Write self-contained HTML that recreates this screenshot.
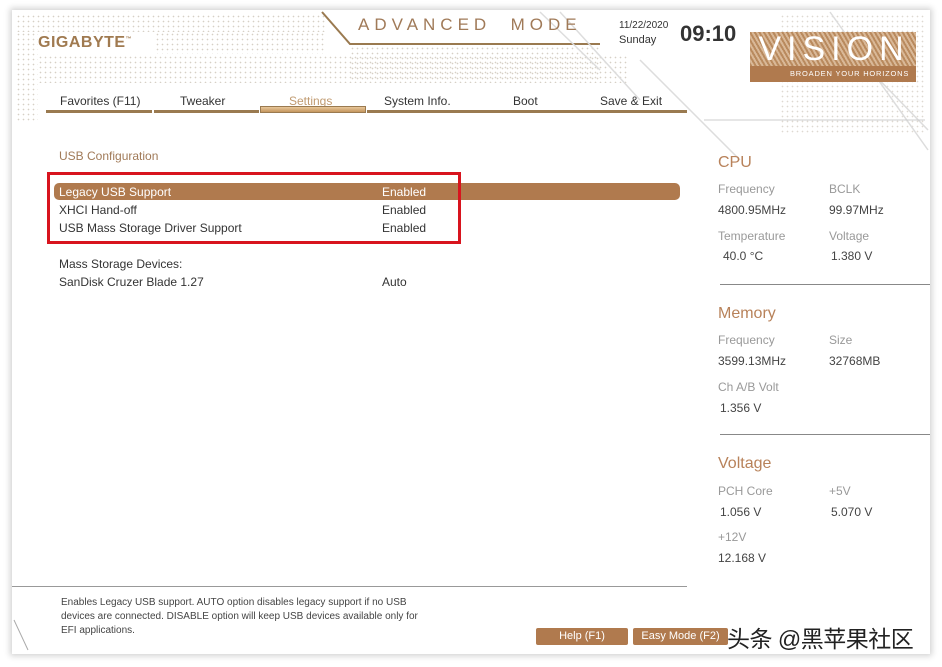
<!DOCTYPE html>
<html><head><meta charset="utf-8"><style>
*{margin:0;padding:0;box-sizing:border-box}
body{width:942px;height:667px;background:#fff;position:relative;overflow:hidden;font-family:"Liberation Sans","Noto Sans CJK SC",sans-serif;color:#333}
.panel{position:absolute;left:12px;top:10px;width:918px;height:644px;background:#fff;box-shadow:0 0 6px 2px rgba(0,0,0,.18)}
.t{position:absolute;white-space:nowrap;font-size:12px}
.dots{position:absolute;background-image:radial-gradient(#d6d0c6 0.7px,transparent 0.9px);background-size:5px 5px}
.tab{position:absolute;top:94px;font-size:12px;color:#333}
.ul{position:absolute;top:110px;height:3px;background:#9a7a50}
.g{color:#999;font-size:12px}
.v{color:#444;font-size:12px}
.h{color:#b8825a;font-size:16px}
.sep{position:absolute;height:1px;background:#888}
.btn{position:absolute;top:628px;height:17px;background:#b07a4e;color:#fff;font-size:11px;text-align:center;line-height:17px;border-radius:2px}
</style></head><body>
<div class="panel"></div>
<div class="dots" style="left:16px;top:14px;width:310px;height:18px"></div>
<div class="dots" style="left:16px;top:32px;width:22px;height:90px"></div>
<div class="dots" style="left:155px;top:32px;width:170px;height:22px"></div>
<div class="dots" style="left:38px;top:55px;width:590px;height:28px"></div>
<div class="dots" style="left:350px;top:46px;width:250px;height:36px"></div>
<div class="dots" style="left:780px;top:14px;width:146px;height:120px;opacity:.8"></div>
<svg style="position:absolute;left:0;top:0" width="942" height="667">
<path d="M322 12 L350 44 L600 44" stroke="#9a7a50" stroke-width="2" fill="none"/>
<path d="M540 12 L600 70 M560 12 L640 100 M640 60 L740 160 M830 12 L928 150 M860 60 L928 130" stroke="#ddd" stroke-width="1.5" fill="none"/>
<path d="M14 620 L28 650" stroke="#aaa" fill="none"/>
<path d="M704 120 L925 120" stroke="#ccc"/>
</svg>
<div class="t" style="left:38px;top:34px;font-size:16px;font-weight:bold;color:#a07a50;letter-spacing:.5px">GIGABYTE<sup style="font-size:6px">™</sup></div>
<div class="t" style="left:358px;top:15px;font-size:17px;color:#a07a58;letter-spacing:5px">ADVANCED&nbsp;&nbsp;MODE</div>
<div class="t" style="left:619px;top:20px;font-size:10px;color:#333">11/22/2020</div>
<div class="t" style="left:619px;top:34px;font-size:11px;color:#333">Sunday</div>
<div class="t" style="left:680px;top:21px;font-size:22px;font-weight:bold;color:#333">09:10</div>
<div style="position:absolute;left:750px;top:32px;width:166px;height:50px;background:repeating-linear-gradient(60deg,#b98a5e 0 2px,#d9b897 2px 4px)"></div>
<div class="t" style="left:752px;top:31px;width:164px;font-size:34px;color:#fff;letter-spacing:6px;line-height:36px;text-align:center">VISION</div>
<div style="position:absolute;left:750px;top:66px;width:166px;height:16px;background:#b07a4e"></div>
<div class="t" style="left:790px;top:69px;font-size:7.5px;color:#fff;letter-spacing:.8px">BROADEN YOUR HORIZONS</div>
<div class="tab" style="left:60px">Favorites (F11)</div>
<div class="tab" style="left:180px">Tweaker</div>
<div class="tab" style="left:289px;color:#c09a70">Settings</div>
<div class="tab" style="left:384px">System Info.</div>
<div class="tab" style="left:513px">Boot</div>
<div class="tab" style="left:600px">Save &amp; Exit</div>
<div class="ul" style="left:46px;width:106px"></div>
<div class="ul" style="left:154px;width:105px"></div>
<div class="ul" style="left:260px;top:106px;height:7px;width:106px;background:linear-gradient(#e8c79a,#c4965e);border:1px solid #9a7a50"></div>
<div class="ul" style="left:367px;width:320px"></div>
<div class="t" style="left:59px;top:149px;color:#a07a58">USB Configuration</div>
<div style="position:absolute;left:54px;top:183px;width:626px;height:17px;background:#b07a4e;border-radius:5px"></div>
<div class="t" style="left:59px;top:185px;color:#fff">Legacy USB Support</div>
<div class="t" style="left:382px;top:185px;color:#fff">Enabled</div>
<div class="t" style="left:59px;top:203px">XHCI Hand-off</div>
<div class="t" style="left:382px;top:203px">Enabled</div>
<div class="t" style="left:59px;top:221px">USB Mass Storage Driver Support</div>
<div class="t" style="left:382px;top:221px">Enabled</div>
<div style="position:absolute;left:47px;top:172px;width:414px;height:72px;border:3px solid #d8141e"></div>
<div class="t" style="left:59px;top:257px">Mass Storage Devices:</div>
<div class="t" style="left:59px;top:275px">SanDisk Cruzer Blade 1.27</div>
<div class="t" style="left:382px;top:275px">Auto</div>
<div class="t h" style="left:718px;top:154px">CPU</div>
<div class="t g" style="left:718px;top:182px">Frequency</div><div class="t g" style="left:829px;top:182px">BCLK</div>
<div class="t v" style="left:718px;top:203px">4800.95MHz</div><div class="t v" style="left:829px;top:203px">99.97MHz</div>
<div class="t g" style="left:718px;top:229px">Temperature</div><div class="t g" style="left:829px;top:229px">Voltage</div>
<div class="t v" style="left:723px;top:249px">40.0 °C</div><div class="t v" style="left:831px;top:249px">1.380 V</div>
<div class="sep" style="left:720px;top:284px;width:210px"></div>
<div class="t h" style="left:718px;top:305px">Memory</div>
<div class="t g" style="left:718px;top:333px">Frequency</div><div class="t g" style="left:829px;top:333px">Size</div>
<div class="t v" style="left:718px;top:354px">3599.13MHz</div><div class="t v" style="left:829px;top:354px">32768MB</div>
<div class="t g" style="left:718px;top:380px">Ch A/B Volt</div>
<div class="t v" style="left:720px;top:401px">1.356 V</div>
<div class="sep" style="left:720px;top:434px;width:210px"></div>
<div class="t h" style="left:718px;top:455px">Voltage</div>
<div class="t g" style="left:718px;top:484px">PCH Core</div><div class="t g" style="left:829px;top:484px">+5V</div>
<div class="t v" style="left:720px;top:505px">1.056 V</div><div class="t v" style="left:831px;top:505px">5.070 V</div>
<div class="t g" style="left:718px;top:530px">+12V</div>
<div class="t v" style="left:718px;top:551px">12.168 V</div>
<div class="sep" style="left:12px;top:586px;width:675px;background:#999"></div>
<div class="t" style="left:61px;top:596px;font-size:10px;line-height:14px;color:#444">Enables Legacy USB support. AUTO option disables legacy support if no USB<br>devices are connected. DISABLE option will keep USB devices available only for<br>EFI applications.</div>
<div class="btn" style="left:536px;width:92px">Help (F1)</div>
<div class="btn" style="left:633px;width:95px">Easy Mode (F2)</div>
<div class="t" style="left:727px;top:620px;font-size:23px;color:#222;letter-spacing:-0.5px">头条 @黑苹果社区</div>
</body></html>
